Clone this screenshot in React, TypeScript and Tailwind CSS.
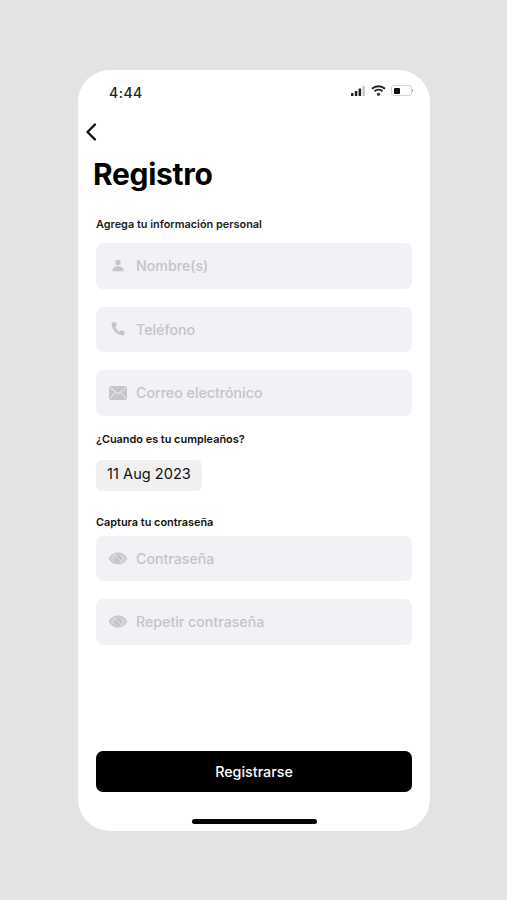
import { ReactNode } from "react";

function UserIcon() {
  return (
    <svg width="14" height="15" viewBox="0 0 16 16" fill="#c6c6ca">
      <circle cx="8" cy="4.600" r="3.100" />
      <path d="M1.800 14.500v-1.600c0-2.500 3-4 6.200-4s6.200 1.500 6.200 4v1.600z" />
    </svg>
  );
}

function PhoneIcon() {
  return (
    <svg width="16" height="16" viewBox="0 0 16 16" fill="#c6c6ca">
      <path d="M2.400 1.500 4.600.9c.5-.1.9.1 1.100.6l1 2.600c.2.4 0 .8-.3 1.100L5.200 6.100c.7 1.700 2.400 3.600 4.300 4.600l1-1.200c.3-.3.7-.4 1.100-.3l2.600 1.100c.5.2.7.7.6 1.100l-.6 2.200c-.1.5-.5.8-1 .8C7 14.300 1.500 8.500 1.600 2.500c0-.5.3-.9.800-1z" />
    </svg>
  );
}

function MailIcon() {
  return (
    <svg width="18" height="14" viewBox="0 0 18 14" fill="#c6c6ca">
      <rect x="0" y="0" width="18" height="14" rx="2" />
      <path d="M1 1.500 9 8l8-6.500M1 12.500l5.500-6.500M17 12.500 11.500 6" fill="none" stroke="#f1f1f6" strokeWidth="1" />
    </svg>
  );
}

function EyeIcon() {
  return (
    <svg width="20" height="13" viewBox="0 0 20 14" fill="none">
      <path d="M1 7C2.900 3.400 6.100 1.500 10 1.500S17.100 3.400 19 7c-1.900 3.600-5.100 5.500-9 5.500S2.900 10.600 1 7z" fill="#d4d4d8" stroke="#c9c9cd" strokeWidth="1.800" />
      <circle cx="10" cy="7" r="3.800" fill="#c2c2c6" />
      <path d="M5 2l10 10" stroke="#eeeef2" strokeWidth="1" />
    </svg>
  );
}

function Field({ icon, label }: { icon: ReactNode; label: string }) {
  return (
    <div className="h-[45.5px] w-full rounded-[7px] bg-[#f1f1f6] flex items-center">
      <div className="w-[40px] flex justify-center shrink-0 pl-[3px]">{icon}</div>
      <span className="text-[14.2px] font-medium text-[#c4c4c8]">{label}</span>
    </div>
  );
}

export default function App() {
  return (
    <div className="min-h-[900px] w-full bg-[#e3e3e3] pt-[70px] font-['Inter',sans-serif]">
      <div className="ml-[78px] w-[352px] h-[761px] rounded-[32px] bg-white flex flex-col overflow-hidden">
        {/* Status bar */}
        <div className="h-[44px] pt-[14px] pl-[31px] pr-[17px] flex items-start justify-between">
          <span className="text-[14px] leading-[17px] font-medium text-[#222] tracking-[0.5px]">4:44</span>
          <div className="flex items-center gap-[5px] pt-[1px]">
            <svg width="15" height="10" viewBox="0 0 15 10" fill="#222">
              <rect x="0" y="7" width="2.500" height="3" rx="0.500" />
              <rect x="3.800" y="5" width="2.500" height="5" rx="0.500" />
              <rect x="7.600" y="2.500" width="2.500" height="7.500" rx="0.500" />
              <rect x="11.400" y="0" width="2.500" height="10" rx="0.500" fill="#c9c9c9" />
            </svg>
            <svg width="15" height="11" viewBox="0 0 15 11" fill="none" stroke="#222" strokeWidth="2">
              <path d="M1 3.800c3.700-3.300 9.300-3.300 13 0" />
              <path d="M3.500 6.300c2.300-2 5.700-2 8 0" />
              <circle cx="7.500" cy="9.200" r="1.500" fill="#222" stroke="none" />
            </svg>
            <div className="flex items-center">
              <div className="w-[21px] h-[11px] rounded-[3px] border border-[#d5d5d5] p-[1.500px]">
                <div className="h-full w-[6px] rounded-[1px] bg-[#111]" />
              </div>
              <div className="w-[1px] h-[3px] bg-[#bbb]" />
            </div>
          </div>
        </div>

        {/* Back */}
        <div className="h-[36px] pl-[6px] flex items-center">
          <svg width="14" height="20" viewBox="0 0 14 20" fill="none" stroke="#111" strokeWidth="2.400" strokeLinecap="round" strokeLinejoin="round">
            <path d="M11 2.500 3.500 10l7.500 7.500" />
          </svg>
        </div>

        <h1 className="pl-[15px] text-[30px] leading-[36px] font-bold text-black tracking-[-0.3px] mt-[6px]">Registro</h1>

        <div className="px-[18px] flex-1 flex flex-col">
          <p className="mt-[25px] text-[10.9px] leading-[14px] font-semibold text-[#222]">Agrega tu información personal</p>
          <div className="mt-[12px] flex flex-col gap-[18px]">
            <Field icon={<UserIcon />} label="Nombre(s)" />
            <Field icon={<PhoneIcon />} label="Teléfono" />
            <Field icon={<MailIcon />} label="Correo electrónico" />
          </div>

          <p className="mt-[16px] text-[10.9px] leading-[14px] font-semibold text-[#111]">¿Cuando es tu cumpleaños?</p>
          <div className="mt-[14px] w-[106px] h-[31px] rounded-md bg-[#f0f0f1] flex items-center justify-center text-[14.6px] text-[#111]">
            11 Aug 2023
          </div>

          <p className="mt-[24px] text-[10.9px] leading-[14px] font-semibold text-[#111]">Captura tu contraseña</p>
          <div className="mt-[7px] flex flex-col gap-[18px]">
            <Field icon={<EyeIcon />} label="Contraseña" />
            <Field icon={<EyeIcon />} label="Repetir contraseña" />
          </div>

          <button className="mt-[106.5px] h-[41px] w-full rounded-[7px] bg-black text-white text-[14.3px] font-medium">
            Registrarse
          </button>
        </div>

        <div className="pb-[7px] flex justify-center">
          <div className="w-[125px] h-[5px] rounded-full bg-black" />
        </div>
      </div>
    </div>
  );
}
